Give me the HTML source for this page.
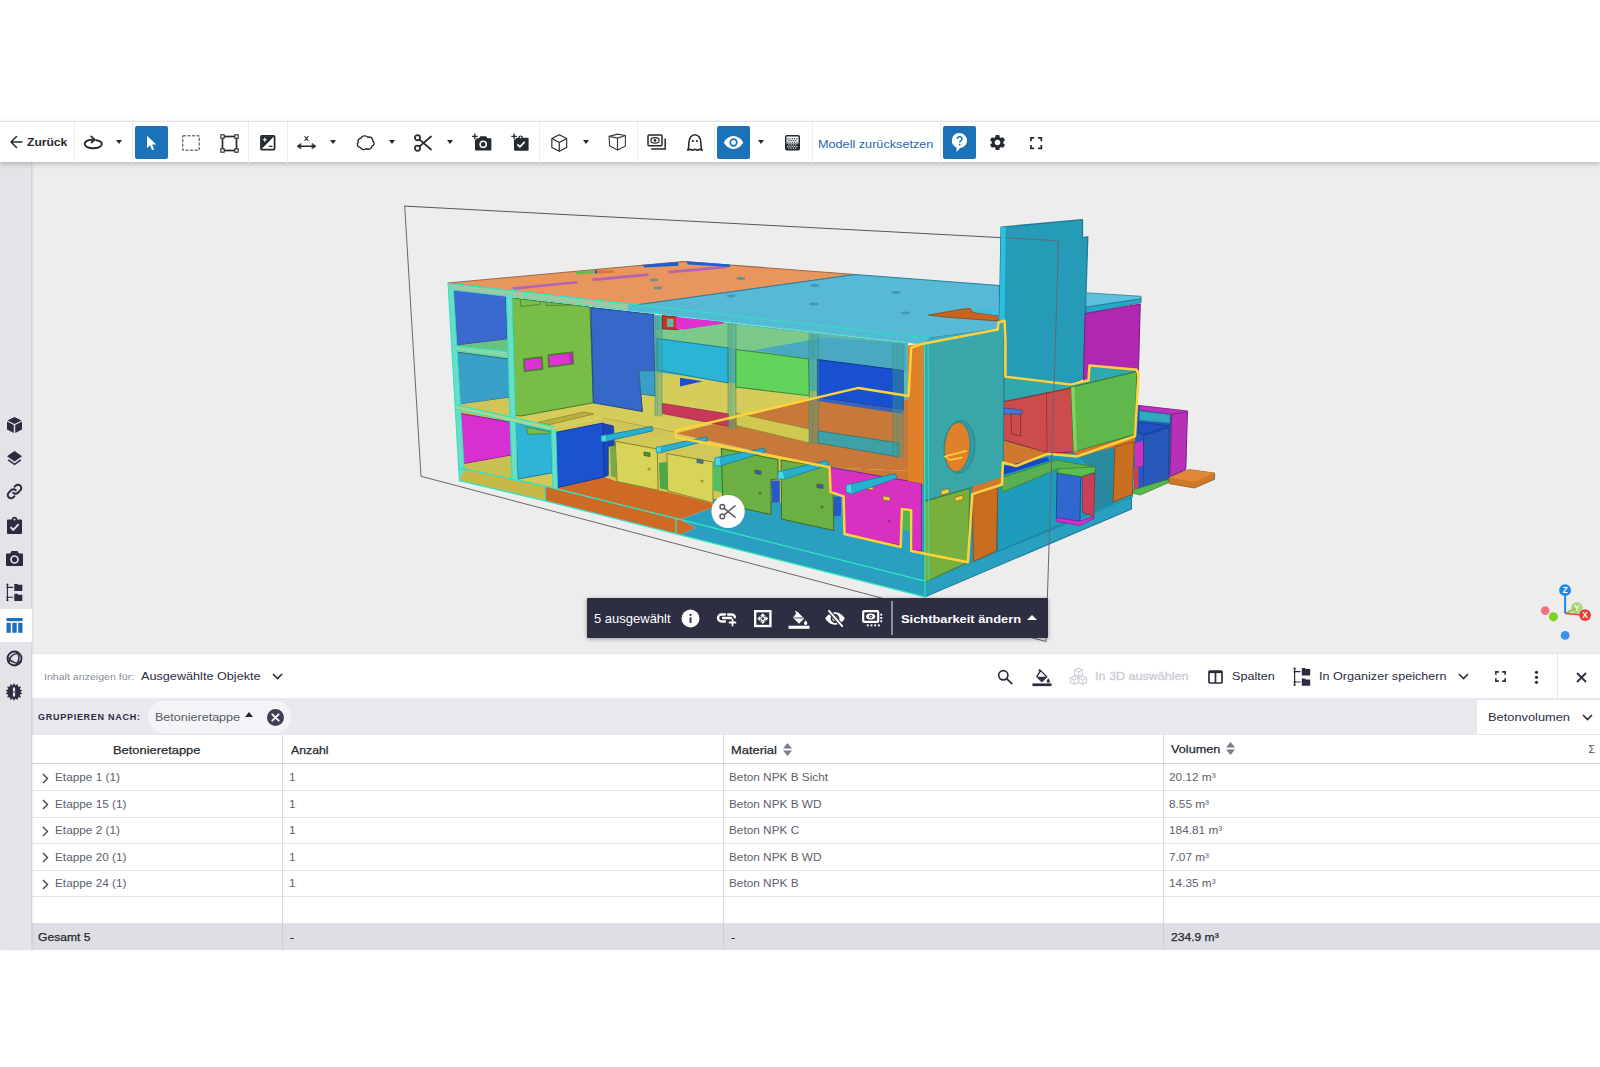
<!DOCTYPE html>
<html lang="de">
<head>
<meta charset="utf-8">
<title>3D Viewer</title>
<style>
*{box-sizing:border-box;margin:0;padding:0}
html,body{width:1600px;height:1067px;overflow:hidden;background:#fff}
body{font-family:"Liberation Sans","DejaVu Sans",sans-serif;color:#252a2e;position:relative}
.abs{position:absolute}
.t{position:absolute;white-space:nowrap;line-height:1;transform-origin:0 50%}
#toolbar{position:absolute;left:0;top:121px;width:1600px;height:41px;background:#fff;border-top:1px solid #e2e2e6;box-shadow:0 2px 5px rgba(0,0,0,.22);z-index:5}
.sep{position:absolute;top:0;width:1px;height:41px;background:#ececf0}
.btn{position:absolute;top:4px;width:33px;height:33px;background:#1b72b8;border-radius:2px}
.ic{position:absolute;overflow:visible}
.dd{position:absolute;width:0;height:0;border-left:3.600px solid transparent;border-right:3.600px solid transparent;border-top:4.400px solid #252a2e;top:18.400px;margin-left:1.300px}
#sidebar{position:absolute;left:0;top:162px;width:32px;height:788px;background:#e3e3e8;border-right:1px solid #d4d4da;box-shadow:1px 0 2px rgba(0,0,0,.07);z-index:2}
#viewer{position:absolute;left:32px;top:162px;width:1568px;height:491px;background:#ededed;overflow:hidden}
#panelhead{position:absolute;left:32px;top:653px;width:1568px;height:45px;background:#fff;border-top:1px solid #e4e4e8}
#grouprow{position:absolute;left:32px;top:698px;width:1568px;height:37px;background:#e8e8ee}
#table{position:absolute;left:32px;top:735px;width:1568px;height:215px;background:#fff}
.hl{position:absolute;left:0;width:1568px;height:1px;background:#e3e3e7}
.vl{position:absolute;top:0;width:1px;height:215px;background:#d9d9de}
#foot{position:absolute;left:0;top:188px;width:1568px;height:27px;background:#dedee4}
#selbar{position:absolute;left:587px;top:598px;width:461px;height:40px;background:#2d2e41;border-radius:1px;box-shadow:0 1px 4px rgba(0,0,0,.35);z-index:4}
</style>
</head>
<body>

<!-- TOOLBAR -->
<div id="toolbar">
<!-- back -->
<svg class="ic" style="left:9px;top:13px" width="14" height="14" viewBox="0 0 14 14" fill="none" stroke="#252a2e" stroke-width="1.5" stroke-linecap="round" stroke-linejoin="round"><path d="M13 7H2M7.5 1.5L2 7l5.5 5.5"/></svg>
<span class="t" style="left:27px;top:13px;font-size:10.90px;font-weight:700;line-height:14px;color:#252a2e;transform:scaleX(1.110)">Zurück</span>
<div class="sep" style="left:74px"></div>
<!-- orbit -->
<svg class="ic" style="left:83px;top:12px" width="21" height="17" viewBox="0 0 21 17" fill="none" stroke="#252a2e" stroke-width="1.9" stroke-linecap="round" stroke-linejoin="round"><path d="M13.500 6.300c3.200.600 5.300 1.900 5.300 3.700 0 2.500-3.800 4.300-8.500 4.300S1.800 12.500 1.800 10c0-2.300 3.300-4 7.700-4.200"/><path d="M8.200 2.300l3.800 3.500-3.600 2.700" stroke-width="1.700"/></svg>
<div class="dd" style="left:115px"></div>
<div class="sep" style="left:132px"></div>
<!-- select (active) -->
<div class="btn" style="left:135px"></div>
<svg class="ic" style="left:146px;top:13px" width="12" height="17" viewBox="0 0 12 17"><path d="M1 .800v12.400l3.100-2.900 2 4.900 2-.900-2-4.700h4.200z" fill="#fff"/></svg>
<!-- dashed rect -->
<svg class="ic" style="left:181.500px;top:13px" width="18" height="16" viewBox="0 0 18 16" fill="none" stroke="#3a3e44" stroke-width="1" stroke-dasharray="3.200 1.400"><rect x=".800" y=".800" width="16.400" height="14.400"/></svg>
<!-- rect with handles -->
<svg class="ic" style="left:219.500px;top:11.500px" width="19" height="19" viewBox="0 0 19 19" fill="none" stroke="#252a2e"><rect x="2.500" y="2.500" width="14" height="14" stroke-width="1.700"/><g fill="#fff" stroke-width="1.100"><rect x=".800" y=".800" width="3.400" height="3.400"/><rect x="14.800" y=".800" width="3.400" height="3.400"/><rect x=".800" y="14.800" width="3.400" height="3.400"/><rect x="14.800" y="14.800" width="3.400" height="3.400"/></g></svg>
<div class="sep" style="left:248px"></div>
<!-- contrast -->
<svg class="ic" style="left:260px;top:13px" width="15.500" height="15.500" viewBox="0 0 17 17"><rect x="1" y="1" width="15" height="15" rx="1" fill="#fff" stroke="#252a2e" stroke-width="1.900"/><path d="M1.500 15.500V1.500h14z" fill="#252a2e"/><path d="M3.200 5.200h4.200M5.300 3.100v4.200" stroke="#fff" stroke-width="1.300"/><path d="M9.600 12.400h4" stroke="#252a2e" stroke-width="1.400"/></svg>
<div class="sep" style="left:287px"></div>
<!-- measure -->
<svg class="ic" style="left:296px;top:12px" width="21" height="18" viewBox="0 0 21 18" fill="none" stroke="#252a2e" stroke-linecap="round" stroke-linejoin="round"><path d="M3 12.200h15" stroke-width="1.500"/><path d="M4.600 9.600L1 12.200l3.600 2.600zM16.400 9.600l3.600 2.600-3.600 2.600z" fill="#252a2e" stroke-width=".600"/><path d="M8.900 2.700l3.200 3.800M12.100 2.700L8.900 6.500" stroke-width="1.100"/></svg>
<div class="dd" style="left:329px"></div>
<!-- cloud -->
<svg class="ic" style="left:354.500px;top:11.500px" width="21" height="18" viewBox="0 0 22 19" fill="none" stroke="#252a2e" stroke-width="1.500" stroke-linejoin="round"><path d="M6.200 4.400C7.500 1.600 11.600 1.200 13.400 3.400c2.700-1 5.600.8 5.200 3.800 2.200 1.400 1.900 4.700-.7 5.600-.2 2.800-3.700 4.300-6 2.600-2.100 1.900-5.600 1.200-6.400-1.300C2.600 13.800 1.400 10.700 3.300 8.900 2.400 6.800 3.900 4.600 6.200 4.400z"/></svg>
<div class="dd" style="left:388px"></div>
<!-- scissors -->
<svg class="ic" style="left:413px;top:11px" width="20" height="20" viewBox="0 0 20 20" fill="none" stroke="#252a2e" stroke-width="1.7" stroke-linecap="round"><circle cx="4.500" cy="4.800" r="2.600"/><circle cx="4.500" cy="15.200" r="2.600"/><path d="M6.600 6.600L18 16.500M6.600 13.400L18 3.500"/></svg>
<div class="dd" style="left:446px"></div>
<!-- camera+ -->
<svg class="ic" style="left:471px;top:10px" width="22" height="20" viewBox="0 0 22 20"><path d="M5 6.200h3l1.300-1.900h5.800l1.300 1.900h3a1 1 0 011 1v10.300a1 1 0 01-1 1H5a1 1 0 01-1-1V7.200a1 1 0 011-1z" fill="#252a2e"/><circle cx="12.200" cy="12.300" r="3.100" fill="none" stroke="#fff" stroke-width="1.500"/><circle cx="12.200" cy="12.300" r=".900" fill="#fff" opacity=".0"/><path d="M.800 4.400h6M3.800 1.400v6" stroke="#fff" stroke-width="3.200"/><path d="M1 4.400h5.600M3.800 1.600v5.600" stroke="#252a2e" stroke-width="1.300"/></svg>
<!-- clipboard+ -->
<svg class="ic" style="left:510px;top:10px" width="20" height="20" viewBox="0 0 20 20"><path d="M5 5.800h3.300a2.300 2.300 0 014.600 0H17.600a1 1 0 011 1V17.700a1 1 0 01-1 1H5a1 1 0 01-1-1V6.800a1 1 0 011-1z" fill="#252a2e"/><circle cx="10.600" cy="5.400" r=".900" fill="#fff"/><path d="M7.400 12.300l2.500 2.500 4.800-5" fill="none" stroke="#fff" stroke-width="1.700"/><path d="M1 4.400h6.200M4.100 1.300v6.200" stroke="#fff" stroke-width="3.200"/><path d="M1.300 4.400h5.600M4.100 1.600v5.600" stroke="#252a2e" stroke-width="1.300"/></svg>
<div class="sep" style="left:539px"></div>
<!-- cube -->
<svg class="ic" style="left:550px;top:10.500px" width="18.500" height="20" viewBox="0 0 20 21" fill="none" stroke="#252a2e" stroke-width="1.250" stroke-linejoin="round"><path d="M10 1.500l8 4.200v9.600l-8 4.200-8-4.200V5.700z"/><path d="M2 5.700l8 4.300 8-4.300M10 10v9.500"/></svg>
<div class="dd" style="left:582px"></div>
<!-- cube2 -->
<svg class="ic" style="left:608px;top:10px" width="20" height="20" viewBox="608 132 20 20" fill="none" stroke="#3a3e44" stroke-width="1.150" stroke-linejoin="round"><path d="M609.100 136.400L617.500 134.100l7.900 1.400V146l-7.900 3.900-7.900-4.200z"/><path d="M609.100 136.400l8.400 1.700 7.900-2.600M617.500 138.100v11.800"/></svg>
<div class="sep" style="left:637px"></div>
<!-- views -->
<svg class="ic" style="left:647px;top:12px" width="20" height="17" viewBox="0 0 20 17" fill="none" stroke="#252a2e" stroke-width="1.500"><rect x="1" y="1" width="14" height="10.800" rx="1"/><path d="M18.200 4.500v10.600H4.200"/><ellipse cx="8" cy="6.400" rx="4.100" ry="2.700" stroke-width="1.200"/><circle cx="8" cy="6.400" r="1.300" fill="#252a2e" stroke="none"/></svg>
<!-- ghost -->
<svg class="ic" style="left:686px;top:11px" width="18" height="19" viewBox="0 0 18 19" fill="none" stroke="#252a2e" stroke-width="1.550" stroke-linejoin="round"><path d="M1.800 17.300c.900-2 1.100-3.800 1.100-7.500 0-4.800 2.600-8 6-8s6 3.200 6 8c0 3.700.200 5.500 1.100 7.500l-2.300-1.100-2.300 1.100-2.500-1.100-2.500 1.100-2.300-1.100z"/><circle cx="6.900" cy="8" r="1.100" fill="#252a2e" stroke="none"/><circle cx="10.900" cy="8" r="1.100" fill="#252a2e" stroke="none"/></svg>
<div class="sep" style="left:714px"></div>
<!-- eye (active) -->
<div class="btn" style="left:717px"></div>
<svg class="ic" style="left:723px;top:13px" width="21" height="15" viewBox="0 0 21 15"><path d="M10.500 1C5.500 1 2 5 .800 7.500 2 10 5.500 14 10.500 14s8.500-4 9.700-6.500C19 5 15.500 1 10.500 1z" fill="#fff"/><circle cx="10.500" cy="7.500" r="3.300" fill="none" stroke="#1b72b8" stroke-width="1.700"/></svg>
<div class="dd" style="left:757px"></div>
<!-- checker -->
<svg class="ic" style="left:784.500px;top:12.500px" width="15" height="15.500" viewBox="0 0 15 15.500"><rect x=".750" y=".750" width="13.500" height="14" rx="1" fill="#fff" stroke="#252a2e" stroke-width="1.500"/><path d="M1 8.500h13v6H1z" fill="#252a2e"/><g fill="#252a2e"><rect x="2.20" y="3.2" width="1.150" height="1.150"/><rect x="4.50" y="3.2" width="1.150" height="1.150"/><rect x="6.80" y="3.2" width="1.150" height="1.150"/><rect x="9.10" y="3.2" width="1.150" height="1.150"/><rect x="11.40" y="3.2" width="1.150" height="1.150"/><rect x="3.35" y="4.9" width="1.150" height="1.150"/><rect x="5.65" y="4.9" width="1.150" height="1.150"/><rect x="7.95" y="4.9" width="1.150" height="1.150"/><rect x="10.25" y="4.9" width="1.150" height="1.150"/><rect x="2.20" y="6.6" width="1.150" height="1.150"/><rect x="4.50" y="6.6" width="1.150" height="1.150"/><rect x="6.80" y="6.6" width="1.150" height="1.150"/><rect x="9.10" y="6.6" width="1.150" height="1.150"/><rect x="11.40" y="6.6" width="1.150" height="1.150"/></g><g fill="#fff"><rect x="3.35" y="9.3" width="1.100" height="1.100"/><rect x="5.65" y="9.3" width="1.100" height="1.100"/><rect x="7.95" y="9.3" width="1.100" height="1.100"/><rect x="10.25" y="9.3" width="1.100" height="1.100"/><rect x="2.20" y="11" width="1.100" height="1.100"/><rect x="4.50" y="11" width="1.100" height="1.100"/><rect x="6.80" y="11" width="1.100" height="1.100"/><rect x="9.10" y="11" width="1.100" height="1.100"/><rect x="11.40" y="11" width="1.100" height="1.100"/><rect x="3.35" y="12.6" width="1.100" height="1.100"/><rect x="5.65" y="12.6" width="1.100" height="1.100"/><rect x="7.95" y="12.6" width="1.100" height="1.100"/><rect x="10.25" y="12.6" width="1.100" height="1.100"/></g></svg>
<div class="sep" style="left:812px"></div>
<span class="t" style="left:818px;top:13.800px;font-size:11.61px;line-height:15px;color:#2068b0;transform:scaleX(1.090)">Modell zurücksetzen</span>
<div class="sep" style="left:940px"></div>
<!-- help (active) -->
<div class="btn" style="left:943px"></div>
<svg class="ic" style="left:950px;top:10px" width="19" height="21" viewBox="0 0 19 21"><path d="M9.500 1a7.500 7.500 0 017.500 7.500c0 4-3 7-7 7.500L6.500 20v-4.600A7.500 7.500 0 019.500 1z" fill="#fff"/><path d="M7.200 6.800c.200-1.300 1.100-2 2.400-2 1.400 0 2.400.800 2.400 2 0 1.700-2.300 1.800-2.300 3.700" fill="none" stroke="#1b72b8" stroke-width="1.500"/><circle cx="9.700" cy="12.600" r=".950" fill="#1b72b8"/></svg>
<!-- gear -->
<svg class="ic" style="left:988px;top:11px" width="19" height="19" viewBox="0 0 24 24"><path fill="#252a2e" d="M19.140 12.940c.040-.300.060-.610.060-.940s-.020-.640-.070-.940l2.030-1.580a.490.490 0 00.120-.610l-1.920-3.320a.488.488 0 00-.590-.220l-2.390.960c-.500-.380-1.030-.700-1.620-.940l-.360-2.540a.484.484 0 00-.480-.410h-3.840c-.240 0-.430.170-.470.410l-.360 2.540c-.590.240-1.130.570-1.620.940l-2.390-.960c-.220-.080-.470 0-.590.220L2.740 8.870c-.120.210-.080.470.12.610l2.030 1.580c-.050.300-.090.630-.090.940s.020.640.070.940l-2.030 1.580a.490.490 0 00-.120.610l1.920 3.320c.120.220.370.290.590.220l2.390-.960c.500.380 1.030.700 1.620.940l.360 2.540c.050.240.240.410.480.410h3.840c.240 0 .440-.170.470-.410l.360-2.540c.590-.240 1.130-.560 1.620-.940l2.390.960c.220.080.470 0 .590-.220l1.920-3.320c.120-.220.070-.470-.120-.610l-2.010-1.580zM12 15.600c-1.980 0-3.600-1.620-3.600-3.600s1.620-3.600 3.600-3.600 3.600 1.620 3.600 3.600-1.620 3.600-3.600 3.600z"/></svg>
<!-- fullscreen -->
<svg class="ic" style="left:1030px;top:14.500px" width="12.300" height="12.300" viewBox="0 0 13 13" fill="none" stroke="#252a2e" stroke-width="1.800"><path d="M1 4.500V1h3.500M8.500 1H12v3.500M12 8.500V12H8.500M4.500 12H1V8.500"/></svg>

</div>

<!-- SIDEBAR -->
<div id="sidebar">
<!-- y offsets relative to sidebar top (162) -->
<!-- cube 425 -->
<svg class="ic" style="left:6px;top:254px" width="17" height="18" viewBox="0 0 17 18"><path d="M8.500 1l7 3.400-7 3.500-7-3.500z M1 5.600l6.800 3.400v8L1 13.600z M16 5.600L9.200 9v8l6.800-3.400z" fill="#2b2c3f"/></svg>
<!-- layers 458 -->
<svg class="ic" style="left:6px;top:288px" width="17" height="17" viewBox="0 0 17 17"><path d="M8.500 1l7.500 5.300-7.500 5.300L1 6.300z" fill="#2b2c3f"/><path d="M2.200 9.800l6.300 4.500 6.300-4.500" fill="none" stroke="#2b2c3f" stroke-width="1.600"/></svg>
<!-- link 491.5 -->
<svg class="ic" style="left:6px;top:321px" width="17" height="17" viewBox="0 0 17 17" fill="none" stroke="#2b2c3f" stroke-width="2" stroke-linecap="round"><path d="M7.200 9.800a3.300 3.300 0 004.700 0l2.400-2.400a3.300 3.300 0 00-4.700-4.700L8.600 3.700"/><path d="M9.800 7.200a3.300 3.300 0 00-4.700 0L2.700 9.600a3.300 3.300 0 004.700 4.700l1-1"/></svg>
<!-- clipboard 525.6 -->
<svg class="ic" style="left:6px;top:354px" width="17" height="19" viewBox="0 0 17 19"><path d="M2 3.500h3.800a2.700 2.700 0 015.400 0H15a1 1 0 011 1V17a1 1 0 01-1 1H2a1 1 0 01-1-1V4.500a1 1 0 011-1z" fill="#2b2c3f"/><circle cx="8.500" cy="3.600" r="1" fill="#e3e3e8"/><path d="M4.500 11l2.800 2.800 5.300-5.600" fill="none" stroke="#e3e3e8" stroke-width="1.900"/></svg>
<!-- camera 558.5 -->
<svg class="ic" style="left:5px;top:388px" width="19" height="17" viewBox="0 0 19 17"><path d="M2 3.500h3L6.600 1h5.800L14 3.500h3a1 1 0 011 1V15a1 1 0 01-1 1H2a1 1 0 01-1-1V4.500a1 1 0 011-1z" fill="#2b2c3f"/><circle cx="9.500" cy="9.500" r="3.500" fill="none" stroke="#e3e3e8" stroke-width="1.700"/></svg>
<!-- tree 592 -->
<svg class="ic" style="left:4px;top:420px" width="21" height="21" viewBox="1291 666 22 22"><path d="M1294.600 668.500V685M1294.600 671.600h6M1294.600 682h6" stroke="#2b2c3f" stroke-width="1.200" fill="none"/><circle cx="1294.600" cy="668.600" r="1.100" fill="#2b2c3f"/><circle cx="1294.600" cy="671.600" r="1.100" fill="#2b2c3f"/><circle cx="1294.600" cy="682" r="1.100" fill="#2b2c3f"/><circle cx="1294.600" cy="685" r="1.100" fill="#2b2c3f"/><path d="M1301.800 668h3.200l.800 1h4.400v6.400h-8.400zM1301.800 678.400h3.200l.800 1h4.400v6.400h-8.400z" fill="#2b2c3f"/></svg>
<!-- table (selected) 609-642 -->
<div class="abs" style="left:0;top:447px;width:32px;height:33px;background:#fff"></div>
<svg class="ic" style="left:6px;top:455px" width="17" height="17" viewBox="0 0 17 17"><rect x=".500" y="1" width="16" height="3.200" fill="#1b72b8"/><rect x=".500" y="5.800" width="4.300" height="10" fill="#1b72b8"/><rect x="6.300" y="5.800" width="4.400" height="10" fill="#1b72b8"/><rect x="12.200" y="5.800" width="4.300" height="10" fill="#1b72b8"/></svg>
<!-- connect 658.8 -->
<svg class="ic" style="left:6px;top:488px" width="17" height="17" viewBox="0 0 17 17" fill="none" stroke="#2b2c3f"><circle cx="8.500" cy="8.500" r="7" stroke-width="1.800"/><path d="M3 12.500C3.500 6 8 2.500 13.500 4M2 7.500c4 5.500 9.500 7 13.500 3.500M10.500 2c3.500 3.500 3.500 9-1 13" stroke-width="1.500"/></svg>
<!-- gear 692 -->
<svg class="ic" style="left:5px;top:521px" width="18" height="18" viewBox="0 0 18 18"><path d="M9 0l1.300 2.600 2.400-1.700.300 2.900 2.900-.300-1.200 2.700 2.700 1.200L15.200 9l2.200 1.600-2.700 1.200 1.200 2.700-2.900-.300-.300 2.900-2.400-1.700L9 18l-1.300-2.600-2.400 1.700-.300-2.900-2.900.300 1.200-2.700L.600 10.600 2.800 9 .600 7.400l2.700-1.200-1.200-2.700 2.900.300.300-2.900 2.400 1.700z" fill="#2b2c3f"/><rect x="7.900" y="4.500" width="2.200" height="9" fill="#e3e3e8"/><rect x="8.400" y="8.200" width="1.200" height="1.600" fill="#2b2c3f"/></svg>

</div>

<!-- VIEWER -->
<div id="viewer">
<svg class="abs" style="left:0;top:0" width="1568" height="491" viewBox="32 162 1568 491">
<polygon points="448.0,283.0 683.0,261.5 855.0,274.5 629.0,306.0" fill="#e9965e" stroke="#9a6a48" stroke-width="1.01" stroke-linejoin="round"/>
<polygon points="629.0,306.0 855.0,274.5 999.4,285.4 999.4,321.0 997.6,329.2 929.0,338.0" fill="#58b9d6" stroke="#2a7f99" stroke-width="1.01" stroke-linejoin="round"/>
<polygon points="929.0,338.0 997.6,329.2 997.8,329.8 924.3,344.0" fill="#3fa8c4"/>
<polygon points="512.0,287.2 576.8,281.1 577.6,283.6 513.8,289.7" fill="#b565b0"/>
<polygon points="591.6,278.6 648.5,273.3 648.5,276.0 592.5,281.3" fill="#b565b0"/>
<polygon points="668.0,270.7 727.0,265.5 727.0,268.3 669.0,273.6" fill="#b565b0"/>
<polygon points="575.0,271.9 593.4,270.1 594.3,273.6 576.8,274.5" fill="#6cb84c"/>
<polygon points="594.5,270.3 597.0,270.2 597.5,273.4 595.0,273.6" fill="#2858c8"/>
<polygon points="597.5,270.2 614.0,270.6 614.0,272.8 598.0,273.6" fill="#d8782c"/>
<polygon points="641.5,264.9 678.3,261.9 678.3,265.8 645.0,267.5" fill="#1f5fd0"/>
<polygon points="686.0,261.2 700.0,262.2 730.0,264.5 730.0,267.0 688.0,264.5" fill="#1f5fd0"/>
<ellipse cx="654" cy="280" rx="4.5" ry="1.4" fill="#3a8aa6" opacity=".7"/>
<ellipse cx="658" cy="288" rx="4.5" ry="1.4" fill="#3a8aa6" opacity=".7"/>
<ellipse cx="741" cy="278.5" rx="4.5" ry="1.4" fill="#3a8aa6" opacity=".7"/>
<ellipse cx="731" cy="296" rx="4.5" ry="1.4" fill="#3a8aa6" opacity=".7"/>
<ellipse cx="815" cy="285.5" rx="4.5" ry="1.4" fill="#3a8aa6" opacity=".7"/>
<ellipse cx="814" cy="304" rx="4.5" ry="1.4" fill="#3a8aa6" opacity=".7"/>
<ellipse cx="896" cy="292.5" rx="4.5" ry="1.4" fill="#3a8aa6" opacity=".7"/>
<ellipse cx="905" cy="313" rx="4.5" ry="1.4" fill="#3a8aa6" opacity=".7"/>
<polygon points="928.5,315.1 960.0,309.5 970.5,308.5 972.3,312.0 997.6,315.5 997.6,321.0 945.0,317.0" fill="#c8641e" stroke="#8a4a20" stroke-width="0.87" stroke-linejoin="round"/>
<polygon points="973.0,308.5 998.5,311.0 998.5,315.5 973.0,312.0" fill="#3cc0e0"/>
<polygon points="1001.1,227.1 1082.5,219.6 1082.5,237.6 1087.8,236.8 1086.0,292.8 1083.4,378.5 1070.3,383.8 1006.4,376.8 1005.5,322.0 999.4,320.8" fill="#259bb8" stroke="#1f7a94" stroke-width="1.30" stroke-linejoin="round"/>
<polygon points="1001.1,227.1 1005.8,226.7 1004.5,322.0 999.4,320.8" fill="#2cc0e0"/>
<polygon points="1086.0,292.8 1141.1,296.3 1141.1,298.8 1086.0,307.2" fill="#5ec0da" stroke="#2a8aa6" stroke-width="0.87" stroke-linejoin="round"/>
<polygon points="1086.0,307.2 1141.1,298.8 1141.1,302.6 1086.0,313.2" fill="#28a8c8" stroke="#1f7a94" stroke-width="0.87" stroke-linejoin="round"/>
<polygon points="1085.1,313.8 1140.3,304.1 1138.5,370.5 1089.5,366.0 1088.6,381.0 1083.4,382.0" fill="#b028b0" stroke="#7a2080" stroke-width="1.01" stroke-linejoin="round"/>
<polygon points="452.0,288.0 512.0,294.5 517.0,480.0 460.0,470.0" fill="#c8c050"/>
<polygon points="453.4,289.4 505.9,295.2 507.1,339.3 455.7,345.4" fill="#3a6ad0" stroke="#27488f" stroke-width="1.01" stroke-linejoin="round"/>
<polygon points="455.7,345.4 507.1,339.3 508.2,352.5 456.0,349.5" fill="#6cc080"/>
<polygon points="456.0,352.0 508.5,359.0 510.3,397.5 458.6,404.5" fill="#3a9fc6" stroke="#27708c" stroke-width="1.01" stroke-linejoin="round"/>
<polygon points="458.6,404.5 510.3,397.5 511.0,420.0 459.0,410.0" fill="#d0c658"/>
<polygon points="459.2,413.3 510.6,422.0 511.7,455.3 462.1,464.0" fill="#d62fd2" stroke="#8f2090" stroke-width="1.01" stroke-linejoin="round"/>
<polygon points="462.0,464.5 512.0,455.5 517.0,481.0 460.0,469.0" fill="#c8c050"/>
<polygon points="510.0,397.0 593.0,402.0 638.0,395.0 656.0,371.0 740.0,383.0 858.0,388.0 676.0,434.0 603.0,418.0 554.0,428.0 515.0,420.0" fill="#d6cc5a"/>
<polygon points="554.0,428.0 603.0,418.0 676.0,434.0 830.0,467.0 834.0,520.0 557.0,488.0" fill="#d2c858"/>
<polyline points="603.0,418.0 676.0,432.5" fill="none" stroke="#9a9440" stroke-width="0.7" stroke-linejoin="round" stroke-linecap="round"/>
<polygon points="538.0,422.3 584.0,412.0 594.0,414.0 549.0,424.7" fill="#b8b040" stroke="#8a8430" stroke-width="0.72" stroke-linejoin="round"/>
<polygon points="675.5,433.5 858.0,388.0 911.0,396.0 911.0,471.0 830.0,467.5" fill="#c87838"/>
<polygon points="512.0,298.1 589.9,306.9 593.4,402.8 520.8,415.9 515.2,415.5" fill="#78bd48" stroke="#4a7a2c" stroke-width="1.01" stroke-linejoin="round"/>
<polygon points="523.9,359.4 541.8,357.1 542.6,369.0 524.6,371.1" fill="#dc32d6" stroke="#4a7a2c" stroke-width="1.59" stroke-linejoin="round"/>
<polygon points="548.4,355.0 572.4,352.4 573.3,363.8 548.8,366.9" fill="#dc32d6" stroke="#4a7a2c" stroke-width="1.59" stroke-linejoin="round"/>
<polygon points="569.0,352.8 572.4,352.4 573.3,363.8 569.6,364.3" fill="#b82cb4"/>
<polyline points="520.5,300.0 521.0,306.5 540.0,304.5 540.0,302.0" fill="none" stroke="#4a7a2c" stroke-width="0.8" stroke-linejoin="round" stroke-linecap="round"/>
<polyline points="546.0,303.0 546.0,305.5 572.0,305.0" fill="none" stroke="#4a7a2c" stroke-width="0.8" stroke-linejoin="round" stroke-linecap="round"/>
<polygon points="590.8,307.4 653.8,314.4 654.6,370.8 638.9,370.8 642.4,411.5 593.4,402.8" fill="#3568c8" stroke="#23478c" stroke-width="1.01" stroke-linejoin="round"/>
<polygon points="638.9,370.8 654.6,370.8 655.0,396.0 641.0,394.0" fill="#3a9fc6" stroke="#27708c" stroke-width="0.87" stroke-linejoin="round"/>
<polygon points="654.0,314.4 908.0,343.0 908.0,400.0 740.0,384.0 655.0,372.0" fill="#5fb8b0"/>
<polygon points="655.0,330.0 680.0,329.0 724.0,323.5 810.0,333.0 810.0,341.0 755.0,350.0 736.0,349.0 680.0,342.0 655.0,338.0" fill="#7cc98a"/>
<polygon points="662.5,315.6 678.3,317.0 678.3,329.6 662.5,328.8" fill="#d03020" stroke="#7a2014" stroke-width="0.87" stroke-linejoin="round"/>
<polygon points="667.0,318.5 673.5,319.0 673.5,327.0 667.0,326.7" fill="#5fb8b0"/>
<polygon points="676.0,317.0 723.8,321.8 723.8,323.5 684.0,329.6 676.0,329.0" fill="#e030d0"/>
<polygon points="755.0,350.0 825.0,337.5 906.0,343.0 906.0,371.0 817.4,359.4 809.0,358.9" fill="#4aa8c0"/>
<polygon points="657.0,338.5 728.1,348.0 728.1,383.0 657.0,370.0" fill="#2cb4d6" stroke="#1f7f99" stroke-width="1.01" stroke-linejoin="round"/>
<polygon points="680.0,377.8 702.8,381.3 680.0,386.5" fill="#1850d0"/>
<polygon points="735.7,349.4 808.6,358.9 809.5,395.8 735.7,387.0" fill="#62d45e" stroke="#3a8a3a" stroke-width="1.01" stroke-linejoin="round"/>
<polygon points="817.4,359.4 903.1,370.4 903.1,409.8 817.4,397.5" fill="#1850d0" stroke="#123a94" stroke-width="1.01" stroke-linejoin="round"/>
<polygon points="662.5,403.5 728.5,414.0 728.5,426.3 662.5,413.5" fill="#c8385a" stroke="#8a2a40" stroke-width="0.72" stroke-linejoin="round"/>
<polygon points="736.0,413.0 809.5,429.0 809.5,443.0 736.0,425.5" fill="#d0c850" stroke="#8a8430" stroke-width="0.72" stroke-linejoin="round"/>
<polygon points="818.0,430.8 898.8,443.0 898.8,457.0 818.0,443.0" fill="#40a0a8" stroke="#2a7078" stroke-width="0.72" stroke-linejoin="round"/>
<polygon points="817.4,397.5 903.1,409.8 903.1,414.0 817.4,401.0" fill="#3a64b8"/>
<polygon points="655.0,316.0 661.9,316.8 661.9,416.6 655.0,415.6" fill="#3f9f8f" opacity="0.38"/>
<polyline points="655.0,316.0 655.0,415.6" fill="none" stroke="#2f8a80" stroke-width="0.7" stroke-linejoin="round" stroke-linecap="round" opacity="0.7"/>
<polyline points="661.9,316.8 661.9,416.6" fill="none" stroke="#2f8a80" stroke-width="0.7" stroke-linejoin="round" stroke-linecap="round" opacity="0.7"/>
<polyline points="657.5,316.4 657.5,416.1" fill="none" stroke="#2f8a80" stroke-width="0.6" stroke-linejoin="round" stroke-linecap="round" opacity="0.5"/>
<polygon points="728.0,323.0 736.0,323.8 736.0,429.5 728.0,428.5" fill="#3f9f8f" opacity="0.38"/>
<polyline points="728.0,323.0 728.0,428.5" fill="none" stroke="#2f8a80" stroke-width="0.7" stroke-linejoin="round" stroke-linecap="round" opacity="0.7"/>
<polyline points="736.0,323.8 736.0,429.5" fill="none" stroke="#2f8a80" stroke-width="0.7" stroke-linejoin="round" stroke-linecap="round" opacity="0.7"/>
<polyline points="731.0,323.4 731.0,429.0" fill="none" stroke="#2f8a80" stroke-width="0.6" stroke-linejoin="round" stroke-linecap="round" opacity="0.5"/>
<polygon points="809.0,334.0 818.5,334.8 818.5,444.5 809.0,443.5" fill="#3f9f8f" opacity="0.38"/>
<polyline points="809.0,334.0 809.0,443.5" fill="none" stroke="#2f8a80" stroke-width="0.7" stroke-linejoin="round" stroke-linecap="round" opacity="0.7"/>
<polyline points="818.5,334.8 818.5,444.5" fill="none" stroke="#2f8a80" stroke-width="0.7" stroke-linejoin="round" stroke-linecap="round" opacity="0.7"/>
<polyline points="812.8,334.4 812.8,444.0" fill="none" stroke="#2f8a80" stroke-width="0.6" stroke-linejoin="round" stroke-linecap="round" opacity="0.5"/>
<polygon points="893.0,344.0 903.0,344.8 903.0,458.0 893.0,457.0" fill="#3f9f8f" opacity="0.38"/>
<polyline points="893.0,344.0 893.0,457.0" fill="none" stroke="#2f8a80" stroke-width="0.7" stroke-linejoin="round" stroke-linecap="round" opacity="0.7"/>
<polyline points="903.0,344.8 903.0,458.0" fill="none" stroke="#2f8a80" stroke-width="0.7" stroke-linejoin="round" stroke-linecap="round" opacity="0.7"/>
<polyline points="897.0,344.4 897.0,457.5" fill="none" stroke="#2f8a80" stroke-width="0.6" stroke-linejoin="round" stroke-linecap="round" opacity="0.5"/>
<polygon points="545.5,486.0 557.5,487.6 603.9,477.1 617.0,481.5 658.0,490.3 667.0,492.0 711.5,503.0 713.0,507.6 680.0,519.5" fill="#cf6a26"/>
<polygon points="713.0,499.0 771.0,501.0 925.0,529.0 925.0,581.1 680.0,519.5 713.0,507.6" fill="#2a9fbf"/>
<polygon points="830.0,467.5 911.0,471.0 924.0,484.0 921.5,484.0 830.5,468.0" fill="#d07830"/>
<polygon points="512.0,420.0 557.0,430.0 557.0,489.0 512.0,481.0" fill="#d2c858"/>
<polygon points="828.0,466.0 925.0,484.0 925.0,556.0 833.0,532.0" fill="#2a9fbf"/>
<polygon points="515.5,422.9 551.4,430.8 552.3,472.8 518.1,478.9" fill="#2fb4d8" stroke="#1f7f99" stroke-width="1.01" stroke-linejoin="round"/>
<polygon points="526.0,427.3 550.0,431.5 550.0,433.5 528.0,434.3" fill="#78bd48" stroke="#4a7a2c" stroke-width="0.72" stroke-linejoin="round"/>
<polygon points="555.4,432.5 603.0,422.9 603.9,477.1 557.5,487.6" fill="#1c52d0" stroke="#123a94" stroke-width="1.01" stroke-linejoin="round"/>
<polygon points="603.0,422.9 613.5,425.5 614.4,445.6 608.3,446.5 608.3,475.4 603.9,477.1" fill="#1845b8" stroke="#123a94" stroke-width="0.72" stroke-linejoin="round"/>
<polygon points="603.0,418.0 676.0,434.0 676.0,441.0 614.0,427.0 613.5,425.5 603.0,422.9" fill="#cfc456"/>
<polygon points="615.3,441.3 657.3,449.1 658.1,490.3 617.0,481.5" fill="#d8d45a" stroke="#8a8430" stroke-width="1.01" stroke-linejoin="round"/>
<polygon points="610.0,446.5 615.3,446.0 616.5,478.0 611.0,476.0" fill="#78a848"/>
<polygon points="666.9,453.5 713.0,462.0 713.0,503.0 667.8,491.1" fill="#d8d45a" stroke="#8a8430" stroke-width="1.01" stroke-linejoin="round"/>
<polygon points="659.0,463.0 666.9,462.0 667.8,490.0 660.0,488.5" fill="#4aa848"/>
<polygon points="713.0,462.0 722.0,465.0 722.0,493.0 713.0,490.0" fill="#50c060"/>
<polygon points="721.3,448.5 778.0,459.5 778.0,479.0 771.0,479.6 771.0,514.6 722.9,504.0" fill="#6cb044" stroke="#3f6e26" stroke-width="1.01" stroke-linejoin="round"/>
<polygon points="771.0,480.5 779.8,480.5 779.8,502.4 771.9,502.4" fill="#2858c8"/>
<polygon points="781.2,460.0 829.4,467.6 830.5,492.8 833.1,493.6 833.7,530.4 781.5,519.0" fill="#6cb044" stroke="#3f6e26" stroke-width="1.01" stroke-linejoin="round"/>
<polygon points="834.0,497.0 841.0,496.3 841.0,515.5 834.0,516.4" fill="#2858c8"/>
<polygon points="830.5,467.5 921.5,483.3 921.5,550.5 912.8,551.4 911.9,511.1 903.1,507.6 900.5,545.3 844.5,533.9 843.6,496.3 830.5,492.8" fill="#d830c0" stroke="#8f2090" stroke-width="1.01" stroke-linejoin="round"/>
<polygon points="903.1,511.0 911.0,512.0 911.0,531.0 903.1,529.5" fill="#50b850"/>
<polygon points="644.0,452.0 650.0,453.0 650.0,456.5 644.0,455.5" fill="#3a9a50" stroke="#55601f" stroke-width="0.87" stroke-linejoin="round"/>
<polygon points="697.0,459.0 703.0,460.0 703.0,463.5 697.0,462.5" fill="#3a78c8" stroke="#55601f" stroke-width="0.87" stroke-linejoin="round"/>
<polygon points="755.0,470.0 761.0,471.0 761.0,474.5 755.0,473.5" fill="#3058c8" stroke="#55601f" stroke-width="0.87" stroke-linejoin="round"/>
<polygon points="817.0,484.0 823.0,485.0 823.0,488.5 817.0,487.5" fill="#3058c8" stroke="#55601f" stroke-width="0.87" stroke-linejoin="round"/>
<polygon points="883.0,496.0 890.0,497.3 890.0,501.0 883.0,499.7" fill="#f0d040" stroke="#8a6a20" stroke-width="0.72" stroke-linejoin="round"/>
<polygon points="866.0,485.0 873.0,486.3 873.0,490.0 866.0,488.7" fill="#f0d040" stroke="#8a6a20" stroke-width="0.72" stroke-linejoin="round"/>
<circle cx="649" cy="469" r="1.6" fill="#9a9a3a"/>
<circle cx="702" cy="481" r="1.6" fill="#9a9a3a"/>
<circle cx="760" cy="493" r="1.6" fill="#4a7a2c"/>
<circle cx="822" cy="507" r="1.6" fill="#4a7a2c"/>
<circle cx="889" cy="521" r="1.6" fill="#9a2a8a"/>
<polygon points="601.3,436.0 652.0,426.4 652.9,430.8 606.5,441.3 601.3,441.3" fill="#28b0d0" stroke="#1f7f99" stroke-width="0.87" stroke-linejoin="round"/>
<polygon points="601.3,436.0 606.3,435.0 606.5,441.3 601.3,441.3" fill="#48d8e8" stroke="#1f9fb0" stroke-width="0.72" stroke-linejoin="round"/>
<polygon points="656.4,447.4 706.3,436.9 708.0,440.4 661.0,452.6 656.4,452.6" fill="#28b0d0" stroke="#1f7f99" stroke-width="0.87" stroke-linejoin="round"/>
<polygon points="656.4,447.4 661.4,446.4 661.0,452.6 656.4,452.6" fill="#48d8e8" stroke="#1f9fb0" stroke-width="0.72" stroke-linejoin="round"/>
<polygon points="715.0,457.9 764.0,448.3 765.8,451.8 721.1,465.8 715.0,465.8" fill="#28b0d0" stroke="#1f7f99" stroke-width="0.87" stroke-linejoin="round"/>
<polygon points="715.0,457.9 720.0,456.9 721.1,465.8 715.0,465.8" fill="#48d8e8" stroke="#1f9fb0" stroke-width="0.72" stroke-linejoin="round"/>
<polygon points="778.0,471.9 827.0,460.5 828.8,464.9 785.0,478.9 778.0,478.9" fill="#28b0d0" stroke="#1f7f99" stroke-width="0.87" stroke-linejoin="round"/>
<polygon points="778.0,471.9 783.0,470.9 785.0,478.9 778.0,478.9" fill="#48d8e8" stroke="#1f9fb0" stroke-width="0.72" stroke-linejoin="round"/>
<polygon points="846.3,485.0 895.3,473.6 897.0,478.0 852.4,493.8 846.3,492.0" fill="#28b0d0" stroke="#1f7f99" stroke-width="0.87" stroke-linejoin="round"/>
<polygon points="846.3,485.0 851.3,484.0 852.4,493.8 846.3,492.0" fill="#48d8e8" stroke="#1f9fb0" stroke-width="0.72" stroke-linejoin="round"/>
<polygon points="459.0,468.0 545.0,486.0 545.3,500.8 459.5,480.6" fill="#c8b848"/>
<polygon points="545.0,486.0 680.0,519.5 696.0,527.8 680.0,534.8 545.3,500.8" fill="#cf6a26"/>
<polygon points="680.0,519.5 925.0,581.1 925.0,596.9 680.0,534.8 696.0,527.8" fill="#2a9fbf"/>
<polygon points="925.0,581.1 1131.5,497.2 1131.5,509.0 925.0,596.9" fill="#2aa0c0" stroke="#1f7a94" stroke-width="1.01" stroke-linejoin="round"/>
<polygon points="925.0,500.0 1003.0,477.0 1003.0,440.0 1135.0,436.0 1133.0,497.0 925.0,581.0" fill="#1f9cbc"/>
<polygon points="1137.0,405.0 1187.5,411.0 1186.0,470.0 1170.0,477.0 1141.0,494.0 1133.5,492.0 1134.5,441.0" fill="#2858b8"/>
<polygon points="997.6,486.0 1056.0,468.0 1095.0,466.0 1114.0,460.0 1114.0,502.5 997.6,551.5" fill="#1f9cbc" stroke="#1a7a94" stroke-width="0.87" stroke-linejoin="round"/>
<polygon points="1094.8,473.0 1114.0,446.8 1114.9,502.0 1094.0,510.0" fill="#2a88a0"/>
<polygon points="1079.0,457.3 1114.0,446.8 1114.9,480.0 1094.8,480.0 1093.0,469.5" fill="#2a8aa0"/>
<polygon points="1003.8,377.6 1070.3,385.2 1070.3,388.1 1003.8,401.3" fill="#30a8b0" stroke="#1f7a80" stroke-width="0.87" stroke-linejoin="round"/>
<polygon points="1002.9,402.1 1074.0,387.4 1075.0,452.0 1047.5,452.9 1002.9,439.8" fill="#cc4c4c" stroke="#8a2c2c" stroke-width="1.01" stroke-linejoin="round"/>
<polyline points="1046.5,393.0 1047.0,452.5" fill="none" stroke="#8a2c2c" stroke-width="0.7" stroke-linejoin="round" stroke-linecap="round"/>
<polygon points="1004.0,408.0 1022.0,410.0 1022.0,414.0 1004.0,414.0" fill="#4a78d0" stroke="#2a4a90" stroke-width="0.72" stroke-linejoin="round"/>
<polyline points="1011.0,414.0 1011.5,434.0 1020.5,436.0 1020.5,414.0" fill="none" stroke="#8a2c2c" stroke-width="0.9" stroke-linejoin="round" stroke-linecap="round"/>
<polygon points="1002.9,440.6 1047.5,452.9 1047.5,455.5 1016.0,465.1 1002.9,461.6" fill="#d07830"/>
<polygon points="1089.5,380.3 1090.4,366.3 1136.8,371.2 1071.1,387.5 1069.0,384.0" fill="#30a8b0" stroke="#1f7a80" stroke-width="0.72" stroke-linejoin="round"/>
<polygon points="1071.1,387.3 1136.8,371.5 1135.0,434.5 1073.8,452.0" fill="#60b84c" stroke="#3a7a2c" stroke-width="1.01" stroke-linejoin="round"/>
<polygon points="1071.1,387.3 1074.5,386.5 1077.0,451.0 1073.8,452.0" fill="#78d860"/>
<polygon points="1073.8,452.0 1135.0,435.4 1135.0,441.5 1077.3,456.4" fill="#d87828"/>
<polygon points="1003.8,466.0 1047.5,457.3 1049.3,460.8 1003.8,474.8" fill="#1848c0"/>
<polygon points="1002.0,477.5 1056.3,460.0 1095.6,467.0 1094.8,473.1 1058.0,468.8 1002.0,492.4" fill="#58b050" stroke="#3a7a2c" stroke-width="0.72" stroke-linejoin="round"/>
<polygon points="1114.9,446.8 1134.1,441.5 1132.4,494.1 1113.1,502.0" fill="#c87020" stroke="#8a4a18" stroke-width="0.87" stroke-linejoin="round"/>
<polygon points="1057.1,473.1 1080.8,476.6 1079.9,521.3 1056.3,517.8" fill="#3068d0" stroke="#22488f" stroke-width="1.01" stroke-linejoin="round"/>
<polygon points="1082.5,476.6 1094.8,473.1 1093.9,516.0 1082.5,512.5" fill="#c84058" stroke="#8a2a3a" stroke-width="0.72" stroke-linejoin="round"/>
<polygon points="1056.3,517.8 1079.9,521.3 1093.9,516.0 1093.9,518.6 1079.9,525.6 1056.3,521.3" fill="#d030d0" stroke="#8a208a" stroke-width="0.72" stroke-linejoin="round"/>
<polygon points="1058.0,468.8 1095.6,467.0 1094.8,472.3 1080.8,476.6 1058.0,473.1" fill="#58c050" stroke="#3a7a2c" stroke-width="0.72" stroke-linejoin="round"/>
<polygon points="1139.4,405.6 1187.5,410.9 1187.5,413.5 1171.8,414.4 1139.4,410.0" fill="#c030c0" stroke="#7a2080" stroke-width="0.72" stroke-linejoin="round"/>
<polygon points="1139.4,410.9 1170.0,414.4 1170.0,423.1 1139.4,420.5" fill="#30a8c0" stroke="#1f7a94" stroke-width="0.72" stroke-linejoin="round"/>
<polygon points="1138.5,422.3 1170.0,425.8 1143.8,434.5 1138.5,432.8" fill="#2050c0" stroke="#123a94" stroke-width="0.72" stroke-linejoin="round"/>
<polygon points="1143.8,435.4 1169.1,427.5 1168.3,481.0 1142.9,488.9" fill="#2858b8" stroke="#1a3a8a" stroke-width="0.72" stroke-linejoin="round"/>
<polygon points="1135.0,443.0 1143.0,441.0 1143.0,466.0 1135.0,467.0" fill="#d030c0"/>
<polygon points="1134.1,467.0 1142.5,466.1 1142.5,488.9 1134.1,488.9" fill="#c84058"/>
<polygon points="1138.5,466.5 1143.0,466.0 1143.0,488.9 1138.5,488.9" fill="#2858c8"/>
<polygon points="1133.3,489.8 1168.3,479.3 1168.3,482.8 1140.3,495.0 1133.3,493.3" fill="#58b850" stroke="#3a7a2c" stroke-width="0.72" stroke-linejoin="round"/>
<polygon points="1171.8,414.4 1187.5,411.8 1185.8,469.5 1170.0,476.5" fill="#b830b8" stroke="#7a2080" stroke-width="0.87" stroke-linejoin="round"/>
<polygon points="1169.1,477.5 1189.3,469.6 1214.6,473.1 1214.6,479.3 1194.5,488.0 1169.1,483.6" fill="#d07828" stroke="#8a4a18" stroke-width="0.72" stroke-linejoin="round"/>
<polygon points="1169.1,477.5 1189.3,469.6 1214.6,473.1 1194.5,481.8" fill="#e08838"/>
<polygon points="908.0,345.5 924.3,343.6 924.3,484.0 908.0,481.0" fill="#e08028"/>
<polygon points="924.3,343.6 997.8,329.2 999.1,321.3 1004.4,322.1 1003.8,400.0 1003.0,477.5 970.2,488.0 924.3,501.1" fill="#3aa6aa" stroke="#2a7a80" stroke-width="1.01" stroke-linejoin="round"/>
<ellipse cx="959.4" cy="446.8" rx="15.4" ry="26.4" fill="#2f9aa8" stroke="#2a7a80" stroke-width=".7" transform="rotate(4 959.4 446.8)"/>
<ellipse cx="957.2" cy="447" rx="12.6" ry="24.6" fill="#e08028" stroke="#2a7a80" stroke-width=".6" transform="rotate(4 957.2 447)"/>
<polygon points="924.3,501.6 969.7,488.5 968.1,562.0 924.3,582.5" fill="#78b040" stroke="#4a7a2c" stroke-width="0.87" stroke-linejoin="round"/>
<polygon points="972.3,493.2 997.8,484.8 996.5,551.0 973.4,561.5" fill="#c86c20" stroke="#8a4a18" stroke-width="0.87" stroke-linejoin="round"/>
<polygon points="972.3,486.5 1002.0,477.2 1002.0,484.5 972.3,493.2" fill="#d07830"/>
<polygon points="955.0,497.0 963.0,495.2 963.0,499.6 955.0,501.6" fill="#f0d040" stroke="#8a6a20" stroke-width="0.72" stroke-linejoin="round"/>
<polygon points="941.0,490.5 949.0,488.7 949.0,493.1 941.0,495.1" fill="#f0d040" stroke="#8a6a20" stroke-width="0.72" stroke-linejoin="round"/>
<polygon points="448.1,283.3 629.0,303.9 627.0,310.5 452.6,290.0" fill="#9ccaa4"/>
<polygon points="629.0,303.9 929.0,338.0 925.0,344.5 627.0,310.5" fill="#54bad6"/>
<polyline points="448.1,283.3 929.0,338.0" fill="none" stroke="#2fe3c3" stroke-width="1.2" stroke-linejoin="round" stroke-linecap="round"/>
<polyline points="452.6,290.0 925.0,344.5" fill="none" stroke="#2fe3c3" stroke-width="1.0" stroke-linejoin="round" stroke-linecap="round" opacity="0.9" stroke-dasharray="5 2"/>
<polygon points="448.1,283.3 459.5,480.6 464.3,470.0 453.4,289.5" fill="#6fdcc8"/>
<polyline points="448.1,283.3 459.5,480.6" fill="none" stroke="#2fe3c3" stroke-width="1.2" stroke-linejoin="round" stroke-linecap="round"/>
<polyline points="453.4,289.5 464.3,470.0" fill="none" stroke="#2fe3c3" stroke-width="1.0" stroke-linejoin="round" stroke-linecap="round" opacity="0.9"/>
<polygon points="455.7,345.8 507.3,351.5 508.3,357.5 456.0,350.5" fill="#86d8a8"/>
<polyline points="455.7,345.8 507.3,351.5" fill="none" stroke="#2fe3c3" stroke-width="1.2" stroke-linejoin="round" stroke-linecap="round"/>
<polyline points="456.0,350.5 508.3,357.5" fill="none" stroke="#2fe3c3" stroke-width="1.0" stroke-linejoin="round" stroke-linecap="round" opacity="0.9"/>
<polygon points="506.4,293.8 512.0,479.8 517.3,481.0 512.0,294.5" fill="#6fdcc8"/>
<polyline points="506.4,293.8 512.0,479.8" fill="none" stroke="#2fe3c3" stroke-width="1.2" stroke-linejoin="round" stroke-linecap="round"/>
<polyline points="512.0,294.5 517.3,481.0" fill="none" stroke="#2fe3c3" stroke-width="1.0" stroke-linejoin="round" stroke-linecap="round" opacity="0.9"/>
<polygon points="456.0,404.8 554.0,426.8 554.0,431.2 456.5,409.2" fill="#a6d890"/>
<polyline points="456.0,404.8 554.0,426.8" fill="none" stroke="#2fe3c3" stroke-width="1.2" stroke-linejoin="round" stroke-linecap="round"/>
<polyline points="456.5,409.2 554.0,431.2" fill="none" stroke="#2fe3c3" stroke-width="1.0" stroke-linejoin="round" stroke-linecap="round" opacity="0.9"/>
<polygon points="551.4,429.0 553.0,486.8 557.5,487.8 555.8,430.0" fill="#6fdcc8"/>
<polyline points="551.4,429.0 553.0,486.8" fill="none" stroke="#2fe3c3" stroke-width="1.2" stroke-linejoin="round" stroke-linecap="round"/>
<polyline points="555.8,430.0 557.5,487.8" fill="none" stroke="#2fe3c3" stroke-width="1.0" stroke-linejoin="round" stroke-linecap="round" opacity="0.9"/>
<polyline points="459.0,468.0 545.0,486.0 680.0,519.5 925.0,581.1" fill="none" stroke="#2fe3c3" stroke-width="1.3" stroke-linejoin="round" stroke-linecap="round"/>
<polyline points="459.5,480.6 545.3,500.8 680.0,534.8 925.0,596.9" fill="none" stroke="#2fe3c3" stroke-width="1.3" stroke-linejoin="round" stroke-linecap="round"/>
<polyline points="545.0,486.0 545.3,500.8" fill="none" stroke="#2fe3c3" stroke-width="1.2" stroke-linejoin="round" stroke-linecap="round"/>
<polyline points="676.0,518.6 676.0,533.8" fill="none" stroke="#2fe3c3" stroke-width="1.2" stroke-linejoin="round" stroke-linecap="round"/>
<polyline points="924.3,343.6 925.0,597.0" fill="none" stroke="#2fe3c3" stroke-width="1.3" stroke-linejoin="round" stroke-linecap="round"/>
<polyline points="928.2,343.0 928.8,580.0" fill="none" stroke="#2fe3c3" stroke-width="1.0" stroke-linejoin="round" stroke-linecap="round" opacity="0.8"/>
<polygon points="677.2,430.2 858.5,387.9 908.6,396.1 911.2,347.6 923.0,343.8 997.8,329.5 998.5,322.5 1004.6,320.8 1005.5,340.0 1005.5,376.8 1070.3,384.6 1088.6,380.3 1089.5,365.4 1136.8,369.8 1138.5,375.0 1135.0,436.3 1077.3,456.4 1047.5,453.8 1016.0,466.0 1002.9,462.5 1002.0,484.5 972.3,494.1 967.9,562.3 911.2,551.0 911.2,510.3 902.0,509.0 900.7,547.0 844.5,534.0 843.6,496.4 830.5,492.0 829.6,467.3 676.2,437.2 675.2,433.5" fill="none" stroke="#ffd23c" stroke-width="2.5" stroke-linejoin="round" stroke-linecap="round"/>
<polyline points="945.0,456.5 966.0,451.0" fill="none" stroke="#ffd23c" stroke-width="1.6" stroke-linejoin="round" stroke-linecap="round"/>
<polyline points="945.0,456.5 950.0,460.0 962.0,457.5" fill="none" stroke="#ffd23c" stroke-width="1.4" stroke-linejoin="round" stroke-linecap="round"/>
<polyline points="404.7,206.1 1000.5,237.6" fill="none" stroke="#55575f" stroke-width="1.0" stroke-linejoin="round" stroke-linecap="round"/>
<polyline points="1006.4,237.8 1058.6,240.8 1046.0,641.5 421.0,476.3 404.7,206.1" fill="none" stroke="#66686f" stroke-width="1.0" stroke-linejoin="round" stroke-linecap="round"/>
<circle cx="728.1" cy="511.5" r="16.6" fill="#fff"/>
<g fill="none" stroke="#5a5b6a" stroke-width="1.5" stroke-linecap="round"><circle cx="722.3" cy="506.8" r="2.3"/><circle cx="722.3" cy="516.4" r="2.3"/><path d="M724.2 508.4L735 517.2M724.2 514.8L735 505.8"/></g>
<circle cx="1545.2" cy="610.6" r="4.3" fill="#f0707e"/><circle cx="1553.4" cy="616.7" r="4.5" fill="#7ed321"/><circle cx="1565.1" cy="635.4" r="4.4" fill="#3d8ef0"/>
<circle cx="1576.9" cy="607.8" r="5.8" fill="#a8d878"/><path d="M1565.5 613.5L1577 607.8" stroke="#8ecf3a" stroke-width="2"/>
<path d="M1565.1 596V613.5" stroke="#1e88e5" stroke-width="2"/><path d="M1565.5 613.5L1585 615.1" stroke="#e8483a" stroke-width="1.6"/>
<circle cx="1565.1" cy="590.2" r="5.9" fill="#1e88e5"/><circle cx="1585.1" cy="615.1" r="5.9" fill="#f03a3a"/>
<g font-family="Liberation Sans,sans-serif" font-weight="700" font-size="8.500" fill="#fff" text-anchor="middle"><text x="1565.1" y="593.3">Z</text><text x="1585.1" y="618.2">X</text><text x="1576.9" y="610.8" opacity=".85">Y</text></g>
</svg>

</div>

<!-- SELECTION BAR -->
<div id="selbar">
<span class="t" style="left:6.500px;top:12.700px;font-size:11.93px;line-height:16px;color:#fff;transform:scaleX(1.090)">5 ausgewählt</span>
<!-- info 690.6 -> 103.6 -->
<svg class="ic" style="left:94px;top:11px" width="19" height="19" viewBox="0 0 19 19"><circle cx="9.500" cy="9.500" r="9" fill="#fff"/><rect x="8.600" y="8.300" width="1.900" height="5.600" fill="#2b2c3f"/><circle cx="9.550" cy="5.800" r="1.150" fill="#2b2c3f"/></svg>
<!-- link+ 726.7 -> 139.7 -->
<svg class="ic" style="left:129px;top:13px" width="22" height="16" viewBox="0 0 22 16" fill="none" stroke="#fff" stroke-width="2.300" stroke-linecap="round"><path d="M9 10.500H5.500a3.500 3.500 0 010-7H9M12 3.500h3.500a3.500 3.500 0 013.400 2.800M7 7h8"/><path d="M13.500 11.500h6M16.500 8.500v6" stroke-width="1.800"/></svg>
<!-- target box 762.5 -> 175.5 -->
<svg class="ic" style="left:167px;top:12px" width="17.600" height="17.200" viewBox="0 0 18 17.600"><rect x="1.200" y="1.200" width="15.600" height="15.200" fill="none" stroke="#fff" stroke-width="2.400"/><path d="M9 3.200l2.600 2.900H6.400zM9 14.400l2.600-2.900H6.400zM3.400 8.800l2.900-2.600v5.200zM14.600 8.800l-2.900-2.600v5.200z" fill="#fff"/><circle cx="9" cy="8.800" r="2" fill="none" stroke="#fff" stroke-width="1.200"/></svg>
<!-- bucket 799 -> 212 -->
<svg class="ic" style="left:201px;top:8px" width="22" height="24" viewBox="0 0 22 24"><g transform="translate(2.600 4.600) scale(.800)"><path d="M8.500 1.500l8.500 8.500-6.500 6.500L3 9z" fill="#fff"/><path d="M6 .800l3 3" stroke="#fff" stroke-width="1.700"/><path d="M4.500 9.200h11" stroke="#2d2e41" stroke-width="1.100"/><path d="M18.800 12c1.300 1.800 2.100 3 2.100 3.900a2.100 2.100 0 01-4.200 0c0-.900.800-2.100 2.100-3.900z" fill="#fff"/></g><rect x=".500" y="19.700" width="21" height="3.100" fill="#fff"/></svg>
<!-- eye-off 835 -> 248 -->
<svg class="ic" style="left:237px;top:11px" width="22" height="19" viewBox="0 0 22 19"><path d="M11 3.300C6 3.300 2.600 7 1.200 9.500 2.600 12 6 15.700 11 15.700S19.400 12 20.800 9.500C19.400 7 16 3.300 11 3.300z" fill="#fff"/><circle cx="11" cy="9.500" r="3.500" fill="none" stroke="#2d2e41" stroke-width="1.800"/><path d="M4 .800l14.500 16.800" stroke="#2d2e41" stroke-width="4"/><path d="M5 1.800l13.200 15.400" stroke="#fff" stroke-width="1.900" stroke-linecap="round"/></svg>
<!-- eye box 871 -> 284 -->
<svg class="ic" style="left:274px;top:11px" width="22" height="20" viewBox="0 0 22 20"><rect x="2.200" y="2.100" width="15" height="10.800" rx=".800" fill="none" stroke="#fff" stroke-width="2.200"/><ellipse cx="9.700" cy="7.500" rx="4.600" ry="3" fill="#fff"/><circle cx="9.700" cy="7.500" r="1.700" fill="#2d2e41"/><circle cx="9.700" cy="7.500" r=".700" fill="#fff"/><g fill="#fff"><rect x="19.300" y="4.700" width="1.900" height="1.900"/><rect x="19.300" y="8" width="1.900" height="1.900"/><rect x="19.300" y="11.300" width="1.900" height="1.900"/><rect x="5.800" y="15.400" width="1.900" height="1.900"/><rect x="9.500" y="15.400" width="1.900" height="1.900"/><rect x="13.200" y="15.400" width="1.900" height="1.900"/><rect x="16.900" y="15.400" width="1.900" height="1.900"/></g></svg>
<div class="abs" style="left:304px;top:3px;width:1.500px;height:34px;background:#8d8e9c"></div>
<span class="t" style="left:314px;top:12.700px;font-size:11.58px;font-weight:700;line-height:16px;color:#fff;transform:scaleX(1.110)">Sichtbarkeit ändern</span>
<div class="abs" style="left:440px;top:17px;width:0;height:0;border-left:5px solid transparent;border-right:5px solid transparent;border-bottom:5.500px solid #fff"></div>

</div>

<!-- PANEL HEADER -->
<div id="panelhead">
<!-- coordinates relative to (32,653) -->
<span class="t" style="left:12px;top:16px;font-size:9.72px;line-height:14px;color:#8a8b99;transform:scaleX(1.090)">Inhalt anzeigen für:</span>
<span class="t" style="left:109px;top:14px;font-size:11.61px;line-height:16px;color:#2b2c3f;transform:scaleX(1.090)">Ausgewählte Objekte</span>
<svg class="ic" style="left:240px;top:19px" width="11" height="7" viewBox="0 0 11 7" fill="none" stroke="#2b2c3f" stroke-width="1.600"><path d="M1 1l4.500 4.500L10 1"/></svg>
<!-- search 1004.8 -> 972.8 -->
<svg class="ic" style="left:965px;top:15px" width="16" height="16" viewBox="0 0 16 16" fill="none" stroke="#2b2c3f" stroke-width="1.700"><circle cx="6.300" cy="6.300" r="4.600"/><path d="M9.700 9.700l5 5" stroke-linecap="round"/></svg>
<!-- bucket 1041.6 -> 1009.6 -->
<svg class="ic" style="left:1000px;top:11px" width="20" height="23" viewBox="0 0 22 24"><g transform="translate(2.200 3.400) scale(.850)"><path d="M8.500 2.500l8 8-6.300 6.300L3.700 10.300z" fill="none" stroke="#2b2c3f" stroke-width="1.700"/><path d="M4 10.300h12l-5.800 5.800z" fill="#2b2c3f"/><path d="M6 1l3 3" stroke="#2b2c3f" stroke-width="1.800"/><path d="M18.500 12.500c1.300 1.800 2 2.800 2 3.700a2 2 0 01-4 0c0-.900.700-1.900 2-3.700z" fill="#2b2c3f"/></g><rect x=".500" y="19.600" width="21" height="3" fill="#2b2c3f"/></svg>
<!-- cubes disabled 1078.4 -> 1046.4 -->
<svg class="ic" style="left:1037px;top:13px" width="19" height="19" viewBox="0 0 19 19" fill="none" stroke="#cfcfd6" stroke-width="1.100" stroke-linejoin="round"><path d="M9.500 1l4 2v4.500l-4 2-4-2V3z M5.500 3l4 2 4-2M9.500 5v4.500"/><path d="M5.300 9l4 2v4.500l-4 2-4-2V11z M1.300 11l4 2 4-2M5.300 13v4.500"/><path d="M13.700 9l4 2v4.500l-4 2-4-2V11z M9.700 11l4 2 4-2M13.700 13v4.500"/></svg>
<span class="t" style="left:1063px;top:14px;font-size:11.50px;line-height:16px;color:#cbcbd2;-webkit-text-stroke:.300px #cbcbd2;transform:scaleX(1.090)">In 3D auswählen</span>
<!-- columns 1215 -> 1183 -->
<svg class="ic" style="left:1175.500px;top:15.500px" width="15" height="14" viewBox="0 0 15 14" fill="none" stroke="#2b2c3f" stroke-width="1.700"><rect x="1" y="1" width="13" height="12" rx="1"/><path d="M7.500 1v12"/><path d="M1 2h13" stroke-width="2.200"/></svg>
<span class="t" style="left:1200px;top:14px;font-size:11.58px;line-height:16px;color:#2b2c3f;transform:scaleX(1.090)">Spalten</span>
<!-- tree 1301 -> 1269 -->
<svg class="ic" style="left:1259px;top:12px" width="22" height="22" viewBox="1291 666 22 22"><path d="M1294.600 668.500V685M1294.600 671.600h6M1294.600 682h6" stroke="#2b2c3f" stroke-width="1.200" fill="none"/><circle cx="1294.600" cy="668.600" r="1.100" fill="#2b2c3f"/><circle cx="1294.600" cy="671.600" r="1.100" fill="#2b2c3f"/><circle cx="1294.600" cy="682" r="1.100" fill="#2b2c3f"/><circle cx="1294.600" cy="685" r="1.100" fill="#2b2c3f"/><path d="M1301.800 668h3.200l.800 1h4.400v6.400h-8.400zM1301.800 678.400h3.200l.800 1h4.400v6.400h-8.400z" fill="#2b2c3f"/></svg>
<span class="t" style="left:1286.800px;top:14px;font-size:11.57px;line-height:16px;color:#2b2c3f;transform:scaleX(1.090)">In Organizer speichern</span>
<svg class="ic" style="left:1426px;top:19px" width="11" height="7" viewBox="0 0 11 7" fill="none" stroke="#2b2c3f" stroke-width="1.600"><path d="M1 1l4.500 4.500L10 1"/></svg>
<!-- fullscreen 1500 -> 1468 -->
<svg class="ic" style="left:1462.500px;top:17px" width="11" height="11" viewBox="0 0 13 13" fill="none" stroke="#2b2c3f" stroke-width="1.900"><path d="M1 4.500V1h3.500M8.500 1H12v3.500M12 8.500V12H8.500M4.500 12H1V8.500"/></svg>
<!-- dots 1536.4 -> 1504.4 -->
<svg class="ic" style="left:1502px;top:15.600px" width="5" height="15" viewBox="0 0 5 15"><circle cx="2.500" cy="2.300" r="1.600" fill="#2b2c3f"/><circle cx="2.500" cy="7.300" r="1.600" fill="#2b2c3f"/><circle cx="2.500" cy="12.300" r="1.600" fill="#2b2c3f"/></svg>
<div class="abs" style="left:1525px;top:0;width:1px;height:45px;background:#e4e4e8"></div>
<!-- X 1580.8 -> 1548.8 -->
<svg class="ic" style="left:1543.500px;top:17.500px" width="11" height="11" viewBox="0 0 11 11" fill="none" stroke="#2b2c3f" stroke-width="1.800"><path d="M1 1l9 9M10 1l-9 9"/></svg>

</div>

<!-- GROUP ROW -->
<div id="grouprow">
<!-- relative to (32,699) -->
<span class="t ns" style="left:6px;top:13px;font-size:9px;font-weight:700;letter-spacing:.730px;line-height:12px;color:#2b2c3f">GRUPPIEREN NACH:</span>
<div class="abs" style="left:116px;top:2.800px;width:143px;height:32.200px;border-radius:17px;background:#f4f4f8"></div>
<span class="t" style="left:122.600px;top:10.500px;font-size:11.50px;line-height:16px;color:#555a64;transform:scaleX(1.090)">Betonieretappe</span>
<div class="abs" style="left:212.500px;top:13.500px;width:0;height:0;border-left:4.500px solid transparent;border-right:4.500px solid transparent;border-bottom:5px solid #252a2e"></div>
<svg class="ic" style="left:234.500px;top:11px" width="17" height="17" viewBox="0 0 17 17"><circle cx="8.500" cy="8.500" r="8.500" fill="#3f4152"/><path d="M5.300 5.300l6.400 6.400M11.700 5.300l-6.400 6.400" stroke="#fff" stroke-width="1.800" stroke-linecap="round"/></svg>
<!-- Betonvolumen dropdown -->
<div class="abs" style="left:1445px;top:2px;width:123px;height:33.500px;background:#fff"></div>
<span class="t" style="left:1456px;top:10.500px;font-size:11.77px;line-height:16px;color:#2b2c3f;transform:scaleX(1.090)">Betonvolumen</span>
<svg class="ic" style="left:1549.500px;top:15.500px" width="11" height="7" viewBox="0 0 11 7" fill="none" stroke="#2b2c3f" stroke-width="1.600"><path d="M1 1l4.500 4.500L10 1"/></svg>

</div>

<!-- TABLE -->
<div id="table">
<div class="vl" style="left:250px"></div>
<div class="vl" style="left:691px"></div>
<div class="vl" style="left:1131px"></div>
<div class="hl" style="top:27.700px;height:1.500px;background:#d2d2d8"></div>
<span class="t" style="left:81px;top:6.500px;font-size:11.83px;line-height:16px;color:#252a2e;-webkit-text-stroke:.250px #252a2e;transform:scaleX(1.090)">Betonieretappe</span>
<span class="t" style="left:258.600px;top:6.500px;font-size:11.28px;line-height:16px;color:#252a2e;-webkit-text-stroke:.250px #252a2e;transform:scaleX(1.090)">Anzahl</span>
<span class="t" style="left:699px;top:6.500px;font-size:11.83px;line-height:16px;color:#252a2e;-webkit-text-stroke:.250px #252a2e;transform:scaleX(1.090)">Material</span>
<span class="t" style="left:1138.800px;top:6px;font-size:11.65px;line-height:16px;color:#252a2e;-webkit-text-stroke:.250px #252a2e;transform:scaleX(1.090)">Volumen</span>
<svg class="ic" style="left:750.5px;top:7.5px" width="9" height="13" viewBox="0 0 9 13"><path d="M4.500 0L9 5.500H0z M4.500 13L0 7.500h9z" fill="#7b7c88"/></svg>
<svg class="ic" style="left:1194px;top:7px" width="9" height="13" viewBox="0 0 9 13"><path d="M4.500 0L9 5.500H0z M4.500 13L0 7.500h9z" fill="#7b7c88"/></svg>
<span class="t ns" style="left:1556.500px;top:6.600px;font-size:10.500px;line-height:14px;color:#4a4d57">Σ</span>
<svg class="ic" style="left:9.500px;top:37.6px" width="7" height="11" viewBox="0 0 7 11" fill="none" stroke="#3f424c" stroke-width="1.350"><path d="M1 1l4.500 4.500L1 10"/></svg>
<span class="t" style="left:23px;top:34.1px;font-size:10.83px;line-height:16px;color:#5d616b;transform:scaleX(1.090)">Etappe 1 (1)</span>
<span class="t" style="left:257px;top:34.1px;font-size:10.83px;line-height:16px;color:#5d616b;transform:scaleX(1.090)">1</span>
<span class="t" style="left:696.700px;top:34.1px;font-size:10.83px;line-height:16px;color:#5d616b;transform:scaleX(1.090)">Beton NPK B Sicht</span>
<span class="t" style="left:1136.800px;top:34.1px;font-size:10.83px;line-height:16px;color:#5d616b;transform:scaleX(1.090)">20.12 m³</span>
<div class="hl" style="top:55.0px"></div>
<svg class="ic" style="left:9.500px;top:64.2px" width="7" height="11" viewBox="0 0 7 11" fill="none" stroke="#3f424c" stroke-width="1.350"><path d="M1 1l4.500 4.500L1 10"/></svg>
<span class="t" style="left:23px;top:60.7px;font-size:10.83px;line-height:16px;color:#5d616b;transform:scaleX(1.090)">Etappe 15 (1)</span>
<span class="t" style="left:257px;top:60.7px;font-size:10.83px;line-height:16px;color:#5d616b;transform:scaleX(1.090)">1</span>
<span class="t" style="left:696.700px;top:60.7px;font-size:10.83px;line-height:16px;color:#5d616b;transform:scaleX(1.090)">Beton NPK B WD</span>
<span class="t" style="left:1136.800px;top:60.7px;font-size:10.83px;line-height:16px;color:#5d616b;transform:scaleX(1.090)">8.55 m³</span>
<div class="hl" style="top:81.5px"></div>
<svg class="ic" style="left:9.500px;top:90.7px" width="7" height="11" viewBox="0 0 7 11" fill="none" stroke="#3f424c" stroke-width="1.350"><path d="M1 1l4.500 4.500L1 10"/></svg>
<span class="t" style="left:23px;top:87.2px;font-size:10.83px;line-height:16px;color:#5d616b;transform:scaleX(1.090)">Etappe 2 (1)</span>
<span class="t" style="left:257px;top:87.2px;font-size:10.83px;line-height:16px;color:#5d616b;transform:scaleX(1.090)">1</span>
<span class="t" style="left:696.700px;top:87.2px;font-size:10.83px;line-height:16px;color:#5d616b;transform:scaleX(1.090)">Beton NPK C</span>
<span class="t" style="left:1136.800px;top:87.2px;font-size:10.83px;line-height:16px;color:#5d616b;transform:scaleX(1.090)">184.81 m³</span>
<div class="hl" style="top:108.0px"></div>
<svg class="ic" style="left:9.500px;top:117.2px" width="7" height="11" viewBox="0 0 7 11" fill="none" stroke="#3f424c" stroke-width="1.350"><path d="M1 1l4.500 4.500L1 10"/></svg>
<span class="t" style="left:23px;top:113.7px;font-size:10.83px;line-height:16px;color:#5d616b;transform:scaleX(1.090)">Etappe 20 (1)</span>
<span class="t" style="left:257px;top:113.7px;font-size:10.83px;line-height:16px;color:#5d616b;transform:scaleX(1.090)">1</span>
<span class="t" style="left:696.700px;top:113.7px;font-size:10.83px;line-height:16px;color:#5d616b;transform:scaleX(1.090)">Beton NPK B WD</span>
<span class="t" style="left:1136.800px;top:113.7px;font-size:10.83px;line-height:16px;color:#5d616b;transform:scaleX(1.090)">7.07 m³</span>
<div class="hl" style="top:134.5px"></div>
<svg class="ic" style="left:9.500px;top:143.7px" width="7" height="11" viewBox="0 0 7 11" fill="none" stroke="#3f424c" stroke-width="1.350"><path d="M1 1l4.500 4.500L1 10"/></svg>
<span class="t" style="left:23px;top:140.2px;font-size:10.83px;line-height:16px;color:#5d616b;transform:scaleX(1.090)">Etappe 24 (1)</span>
<span class="t" style="left:257px;top:140.2px;font-size:10.83px;line-height:16px;color:#5d616b;transform:scaleX(1.090)">1</span>
<span class="t" style="left:696.700px;top:140.2px;font-size:10.83px;line-height:16px;color:#5d616b;transform:scaleX(1.090)">Beton NPK B</span>
<span class="t" style="left:1136.800px;top:140.2px;font-size:10.83px;line-height:16px;color:#5d616b;transform:scaleX(1.090)">14.35 m³</span>
<div class="hl" style="top:161.0px"></div>
<div id="foot"><div class="vl" style="left:250px;height:27px;background:#cfcfd6"></div><div class="vl" style="left:691px;height:27px;background:#cfcfd6"></div><div class="vl" style="left:1131px;height:27px;background:#cfcfd6"></div>
<span class="t" style="left:6px;top:6px;font-size:11.10px;line-height:16px;color:#252a2e;-webkit-text-stroke:.250px #252a2e;transform:scaleX(1.090)">Gesamt 5</span>
<span class="t" style="left:258px;top:6px;font-size:11.10px;line-height:16px;color:#252a2e;-webkit-text-stroke:.250px #252a2e;transform:scaleX(1.090)">-</span>
<span class="t" style="left:699px;top:6px;font-size:11.10px;line-height:16px;color:#252a2e;-webkit-text-stroke:.250px #252a2e;transform:scaleX(1.090)">-</span>
<span class="t" style="left:1138.800px;top:6px;font-size:11.10px;line-height:16px;color:#252a2e;-webkit-text-stroke:.250px #252a2e;transform:scaleX(1.090)">234.9 m³</span>
</div>

</div>

</body>
</html>
